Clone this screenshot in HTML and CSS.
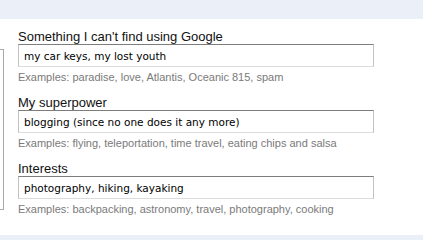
FILE: index.html
```html
<!DOCTYPE html>
<html>
<head>
<meta charset="utf-8">
<link rel="stylesheet" href="styles.css">
</head>
<body>
<div class="topbar"></div>
<div class="content">
  <div class="side"></div>
  <form class="form">
    <div class="field">
      <label class="label">Something I can't find using Google</label>
      <input class="input" type="text" value="my car keys, my lost youth">
      <div class="hint">Examples: paradise, love, Atlantis, Oceanic 815, spam</div>
    </div>
    <div class="field">
      <label class="label">My superpower</label>
      <input class="input" type="text" value="blogging (since no one does it any more)">
      <div class="hint">Examples: flying, teleportation, time travel, eating chips and salsa</div>
    </div>
    <div class="field">
      <label class="label">Interests</label>
      <input class="input" type="text" value="photography, hiking, kayaking">
      <div class="hint">Examples: backpacking, astronomy, travel, photography, cooking</div>
    </div>
  </form>
</div>
<div class="bottombar"></div>
</body>
</html>
```
FILE: styles.css
```css
html, body {
  margin: 0;
  padding: 0;
  background: #ffffff;
}
body {
  width: 423px;
  height: 240px;
  overflow: hidden;
  font-family: "Liberation Sans", Arial, sans-serif;
}
.topbar {
  height: 19px;
  background: #ebeff8;
}
.content {
  height: 216px;
  display: flex;
  align-items: flex-start;
}
.side {
  box-sizing: border-box;
  width: 4px;
  height: 161px;
  margin-top: 30px;
  border: 1px solid #a9a9a9;
  border-left: none;
  flex: none;
}
.form {
  margin: 10px 0 0 14px;
  width: 356px;
  display: flex;
  flex-direction: column;
  gap: 11px;
}
.field {
  display: flex;
  flex-direction: column;
}
.label {
  display: block;
  font-size: 13px;
  line-height: 15px;
  color: #111;
}
.input {
  box-sizing: border-box;
  width: 356px;
  height: 23px;
  margin: 0;
  padding: 0 4px 0 5px;
  border: 1px solid #c2c2c2;
  border-top-color: #7d7d7d;
  border-bottom-color: #dcdcdc;
  border-radius: 0;
  outline: none;
  background: #fff;
  font-family: "DejaVu Sans", Verdana, sans-serif;
  font-size: 10.5px;
  color: #000;
  -webkit-appearance: none;
  appearance: none;
}
.hint {
  margin-top: 4px;
  font-size: 11px;
  line-height: 13px;
  color: #7a7a7a;
  white-space: nowrap;
}
.bottombar {
  height: 5px;
  background: #ebeff8;
}
```
